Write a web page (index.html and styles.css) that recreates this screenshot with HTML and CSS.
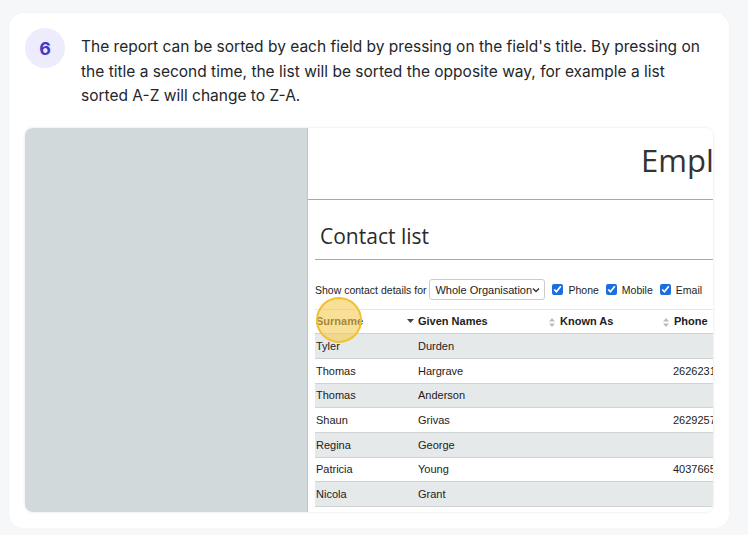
FILE: index.html
```html
<!DOCTYPE html>
<html lang="en">

<head>
  <meta charset="UTF-8">
  <meta name="viewport" content="width=device-width, initial-scale=1.0">
  <title>Step 6 - Sorting the report</title>
  <link rel="stylesheet" href="styles.css">
</head>

<body>
  <div class="card">
    <div class="step">
      <div class="step-num">6</div>
      <p class="step-text">The report can be sorted by each field by pressing on the field's title. By pressing on the title a second time, the list will be sorted the opposite way, for example a list sorted A-Z will change to Z-A.</p>
    </div>

    <div class="shot">
      <div class="shot-side"></div>
      <div class="shot-main">
        <div class="app-title">Employee Contacts</div>

        <div class="contacts">
          <h2 class="contacts-title">Contact list</h2>

          <div class="filters">
            <span>Show contact details for</span>
            <span class="select">Whole Organisation
              <svg width="8" height="6" viewBox="0 0 8 6"><path d="M1 1.5 4 4.5 7 1.5" fill="none" stroke="#333" stroke-width="1.4"/></svg>
            </span>
            <label class="check"><input type="checkbox" checked> Phone</label>
            <label class="check"><input type="checkbox" checked> Mobile</label>
            <label class="check"><input type="checkbox" checked> Email</label>
          </div>

          <div class="table-wrap">
            <table class="contact-table">
              <colgroup>
                <col class="col-surname">
                <col class="col-given">
                <col class="col-known">
                <col class="col-phone">
              </colgroup>
              <thead>
                <tr>
                  <th>Surname</th>
                  <th><span class="sort sort-down"><svg width="7" height="4" viewBox="0 0 7 4"><path d="M0 0h7L3.5 4z" fill="#444"/></svg></span>Given Names</th>
                  <th><span class="sort"><svg width="6" height="9" viewBox="0 0 6 9"><path d="M0 3.6h6L3 0zM0 5.4h6L3 9z" fill="#bbb"/></svg></span>Known As</th>
                  <th><span class="sort"><svg width="6" height="9" viewBox="0 0 6 9"><path d="M0 3.6h6L3 0zM0 5.4h6L3 9z" fill="#bbb"/></svg></span>Phone</th>
                </tr>
              </thead>
              <tbody>
                <tr><td>Tyler</td><td>Durden</td><td></td><td></td></tr>
                <tr><td>Thomas</td><td>Hargrave</td><td></td><td>2626231</td></tr>
                <tr><td>Thomas</td><td>Anderson</td><td></td><td></td></tr>
                <tr><td>Shaun</td><td>Grivas</td><td></td><td>2629257</td></tr>
                <tr><td>Regina</td><td>George</td><td></td><td></td></tr>
                <tr><td>Patricia</td><td>Young</td><td></td><td>4037665</td></tr>
                <tr><td>Nicola</td><td>Grant</td><td></td><td></td></tr>
              </tbody>
            </table>
            <!-- click highlight over the Surname header -->
            <div class="click-mark"></div>
          </div>
        </div>
      </div>
    </div>
  </div>
</body>

</html>
```

FILE: styles.css
```css
body {
  margin: 0;
  background-color: #f6f7f9;
  font-family: "Inter", "Liberation Sans", sans-serif;
}

.card {
  width: 688px;
  margin: 13px 0 0 9px;
  padding: 15px 16px 16px 16px;
  background-color: #ffffff;
  border-radius: 14px;
  box-shadow: 0 0 2px rgba(0, 0, 0, 0.05);
}

.step {
  display: flex;
  gap: 16px;
  align-items: flex-start;
}

.step-num {
  flex: none;
  width: 40px;
  height: 40px;
  border-radius: 50%;
  background-color: #ececfd;
  color: #4338ca;
  font-weight: 700;
  font-size: 18px;
  display: flex;
  align-items: center;
  justify-content: center;
}

.step-text {
  margin: 0;
  padding-top: 7px;
  font-size: 15.5px;
  line-height: 24.5px;
  color: #23262b;
}

.shot {
  display: flex;
  height: 384px;
  margin-top: 19px;
  border-radius: 8px;
  overflow: hidden;
  box-shadow: 0 0 3px rgba(0, 0, 0, 0.12);
}

.shot-side {
  flex: none;
  width: 282px;
  background-color: #d1d9db;
  border-right: 1px solid #bfc6c8;
}

.shot-main {
  flex: 1;
  min-width: 0;
  overflow: hidden;
  background-color: #ffffff;
  font-family: "Liberation Sans", Arial, sans-serif;
  color: #222;
}

.app-title {
  height: 71px;
  padding-left: 333px;
  border-bottom: 1px solid #aaaaaa;
  font-family: "Open Sans", sans-serif;
  font-size: 31px;
  line-height: 65px;
  color: #333;
  white-space: nowrap;
  overflow: hidden;
}

.contacts {
  margin-left: 7px;
}

.contacts-title {
  margin: 0;
  height: 59px;
  padding-left: 5px;
  border-bottom: 1px solid #aaaaaa;
  font-family: "Open Sans", sans-serif;
  font-weight: 400;
  font-size: 21px;
  line-height: 72px;
  color: #2b2b2b;
  white-space: nowrap;
}

.filters {
  display: flex;
  align-items: center;
  height: 38px;
  padding-top: 11px;
  font-size: 10.5px;
  white-space: nowrap;
  overflow: hidden;
}

.select {
  flex: none;
  display: inline-flex;
  align-items: center;
  justify-content: space-between;
  width: 105px;
  height: 19px;
  margin-left: 3px;
  padding: 0 4px 0 5px;
  border: 1px solid #cccccc;
  border-radius: 3px;
  font-size: 11px;
}

.check {
  flex: none;
  display: inline-flex;
  align-items: center;
  margin-left: 7px;
}

.check input {
  width: 11px;
  height: 11px;
  margin: 0 5px 0 0;
  accent-color: #1a6fe0;
}

.table-wrap {
  position: relative;
}

.contact-table {
  width: 470px;
  table-layout: fixed;
  border-collapse: collapse;
  font-size: 11px;
}

.col-surname { width: 90px; }
.col-given { width: 142px; }
.col-known { width: 114px; }
.col-phone { width: 124px; }

.contact-table th,
.contact-table td {
  height: 23.7px;
  padding: 0 0 0 13px;
  text-align: left;
  white-space: nowrap;
  overflow: hidden;
  border-bottom: 1px solid #cfd3d5;
}

.contact-table th:first-child,
.contact-table td:first-child {
  padding-left: 1px;
}

.contact-table th {
  border-top: 1px solid #e4e6e7;
  font-weight: 700;
  color: #222;
}

.contact-table tbody tr:nth-child(odd) {
  background-color: #e6e9ea;
}

.contact-table td:last-child {
  padding-left: 12px;
}

.sort {
  display: inline-block;
  width: 11px;
  margin-left: -11px;
  vertical-align: middle;
  line-height: 0;
}

.sort-down svg {
  margin-bottom: 2px;
}

.click-mark {
  position: absolute;
  left: 1px;
  top: -12px;
  width: 42px;
  height: 42px;
  border-radius: 50%;
  border: 2px solid #f0c133;
  background-color: rgba(247, 203, 80, 0.6);
}
```
